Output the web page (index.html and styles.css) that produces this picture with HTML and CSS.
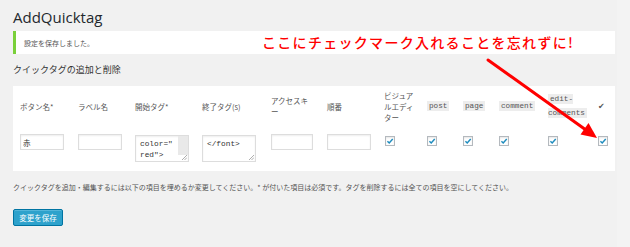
FILE: index.html
```html
<!DOCTYPE html>
<html lang="ja">
<head>
<meta charset="utf-8">
<title>AddQuicktag</title>
<link rel="stylesheet" href="styles.css">
</head>
<body>
<div class="wrap">
  <h1 class="title">AddQuicktag</h1>
  <div class="notice">
    <p>設定を保存しました。</p>
    <span class="annot">ここにチェックマーク入れることを忘れずに!</span>
  </div>
  <h3 class="sub">クイックタグの追加と削除</h3>
  <div class="tablebox">
    <div class="grid">
      <div class="th">ボタン名*</div>
      <div class="th">ラベル名</div>
      <div class="th">開始タグ*</div>
      <div class="th">終了タグ(s)</div>
      <div class="th">アクセスキー</div>
      <div class="th">順番</div>
      <div class="th">ビジュアルエディター</div>
      <div class="th"><code>post</code></div>
      <div class="th"><code>page</code></div>
      <div class="th"><code>comment</code></div>
      <div class="th th-narrow"><code>edit-comments</code></div>
      <div class="th"><span class="tick">✔</span></div>

      <div class="td"><input class="inp" type="text" value="赤"></div>
      <div class="td"><input class="inp" type="text" value=""></div>
      <div class="td"><div class="ta"><span class="ta-text">color="<br>red"&gt;</span><span class="ta-track"></span><svg class="grip" width="6" height="6" viewBox="0 0 6 6"><path d="M1 6 L6 1 M3.5 6 L6 3.5" stroke="#999" stroke-width="0.8"/></svg></div></div>
      <div class="td"><div class="ta"><span class="ta-text">&lt;/font&gt;</span><svg class="grip" width="6" height="6" viewBox="0 0 6 6"><path d="M1 6 L6 1 M3.5 6 L6 3.5" stroke="#999" stroke-width="0.8"/></svg></div></div>
      <div class="td"><input class="inp inp-sm" type="text" value=""></div>
      <div class="td"><input class="inp" type="text" value=""></div>
      <div class="td"><span class="cb cb-first"><svg viewBox="0 0 10 10" width="8" height="8"><path d="M1.8 5.2 L4 7.4 L8.4 2.4" fill="none" stroke="#1e8cbe" stroke-width="1.8"/></svg></span></div>
      <div class="td"><span class="cb"><svg viewBox="0 0 10 10" width="8" height="8"><path d="M1.8 5.2 L4 7.4 L8.4 2.4" fill="none" stroke="#1e8cbe" stroke-width="1.8"/></svg></span></div>
      <div class="td"><span class="cb"><svg viewBox="0 0 10 10" width="8" height="8"><path d="M1.8 5.2 L4 7.4 L8.4 2.4" fill="none" stroke="#1e8cbe" stroke-width="1.8"/></svg></span></div>
      <div class="td"><span class="cb"><svg viewBox="0 0 10 10" width="8" height="8"><path d="M1.8 5.2 L4 7.4 L8.4 2.4" fill="none" stroke="#1e8cbe" stroke-width="1.8"/></svg></span></div>
      <div class="td"><span class="cb"><svg viewBox="0 0 10 10" width="8" height="8"><path d="M1.8 5.2 L4 7.4 L8.4 2.4" fill="none" stroke="#1e8cbe" stroke-width="1.8"/></svg></span></div>
      <div class="td"><span class="cb"><svg viewBox="0 0 10 10" width="8" height="8"><path d="M1.8 5.2 L4 7.4 L8.4 2.4" fill="none" stroke="#1e8cbe" stroke-width="1.8"/></svg></span></div>
    </div>
  </div>
  <p class="desc">クイックタグを追加・編集するには以下の項目を埋めるか変更してください。* が付いた項目は必須です。タグを削除するには全ての項目を空にしてください。</p>
  <button class="btn" type="button">変更を保存</button>
</div>
<div class="strip"></div>
<svg class="arrow" width="630" height="247" viewBox="0 0 630 247">
  <line x1="488" y1="60" x2="586" y2="130" stroke="#ff0000" stroke-width="3" stroke-linecap="round"/>
  <polygon points="597,138 580.5,134.5 588.5,123" fill="#ff0000"/>
</svg>
</body>
</html>
```

FILE: styles.css
```css
html, body {
  margin: 0;
  padding: 0;
  background: #f1f1f1;
  width: 630px;
  height: 247px;
  overflow: hidden;
}

body {
  font-family: "Noto Sans CJK JP", "Open Sans", sans-serif;
  color: #444;
  position: relative;
}

.wrap {
  padding-left: 13px;
  width: 602px;
}

.title {
  margin: 7px 0 0;
  font-family: "Open Sans", sans-serif;
  font-weight: 400;
  font-size: 15px;
  line-height: 20px;
  color: #23282d;
}

.notice {
  position: relative;
  margin-top: 4px;
  height: 23px;
  background: #fff;
  border-left: 3px solid #7ad03a;
  box-sizing: border-box;
  display: flex;
  align-items: center;
  padding-left: 8px;
}

.notice p {
  margin: 0;
  font-size: 7px;
  line-height: 10px;
  color: #555;
}

.annot {
  position: absolute;
  left: 246px;
  top: 0;
  font-family: "Noto Sans CJK JP", sans-serif;
  font-weight: 500;
  font-size: 14px;
  letter-spacing: 1.3px;
  line-height: 22px;
  color: #ff0000;
  white-space: nowrap;
}

.sub {
  margin: 10px 0 0;
  font-size: 9px;
  font-weight: 400;
  line-height: 12px;
  color: #333;
}

.tablebox {
  margin-top: 10px;
  background: #fff;
  padding: 0 0 9px 7px;
}

.grid {
  display: grid;
  grid-template-columns: 58px 57px 67px 69px 56px 57px 43px 36px 36px 49px 50px 1fr;
  grid-template-rows: 40px auto;
}

.th {
  align-self: center;
  font-size: 7.5px;
  line-height: 11px;
  color: #555;
  padding-right: 12px;
  box-sizing: border-box;
}

.th-narrow {
  padding-right: 12px;
}

code {
  font-family: "Liberation Mono", monospace;
  font-size: 7.7px;
  line-height: 13px;
  background: #ededed;
  padding: 1px 2px;
  color: #555;
}

.tick {
  font-family: "DejaVu Sans", sans-serif;
  font-size: 8px;
  color: #555;
}

.td {
  padding-top: 8px;
  align-self: start;
}

.inp {
  display: block;
  width: 44px;
  height: 16px;
  box-sizing: border-box;
  margin: 0;
  border: 1px solid #ddd;
  box-shadow: inset 0 1px 2px rgba(0, 0, 0, 0.07);
  background: #fff;
  padding: 0 0 0 2px;
  font-family: "Noto Sans CJK JP", sans-serif;
  font-size: 7.5px;
  color: #333;
  outline: none;
}

.inp-sm {
  width: 42px;
}

.ta {
  position: relative;
  margin-top: 1px;
  width: 54px;
  height: 27px;
  box-sizing: border-box;
  border: 1px solid #ddd;
  box-shadow: inset 0 1px 2px rgba(0, 0, 0, 0.07);
  background: #fff;
  padding: 3px 0 0 4px;
}

.ta-text {
  display: block;
  font-family: "Liberation Mono", monospace;
  font-size: 7.8px;
  line-height: 11px;
  color: #333;
}

.ta-track {
  position: absolute;
  right: 0;
  top: 0;
  width: 10px;
  bottom: 6px;
  background: #e9e9e9;
}

.grip {
  position: absolute;
  right: 1px;
  bottom: 1px;
}

.cb {
  display: flex;
  align-items: center;
  justify-content: center;
  width: 10px;
  height: 10px;
  box-sizing: border-box;
  margin-top: 2px;
  border: 1px solid #b4b9be;
  background: #fff;
  box-shadow: inset 0 1px 2px rgba(0, 0, 0, 0.1);
}

.cb-first {
  margin-left: 1px;
}

.desc {
  margin: 11px 0 0;
  font-size: 7px;
  line-height: 10px;
  color: #555;
  white-space: nowrap;
}

.btn {
  display: block;
  margin-top: 17px;
  width: 50px;
  height: 17px;
  padding: 0;
  background: #2ea2cc;
  border: 1px solid #0074a2;
  border-radius: 2px;
  box-shadow: inset 0 1px 0 rgba(120, 200, 230, 0.5);
  font-family: "Noto Sans CJK JP", sans-serif;
  font-size: 7.5px;
  color: #fff;
}

.strip {
  position: absolute;
  left: 617px;
  top: 0;
  width: 13px;
  height: 247px;
  background: #f3f3f3;
}

.arrow {
  position: absolute;
  left: 0;
  top: 0;
  pointer-events: none;
}
```
